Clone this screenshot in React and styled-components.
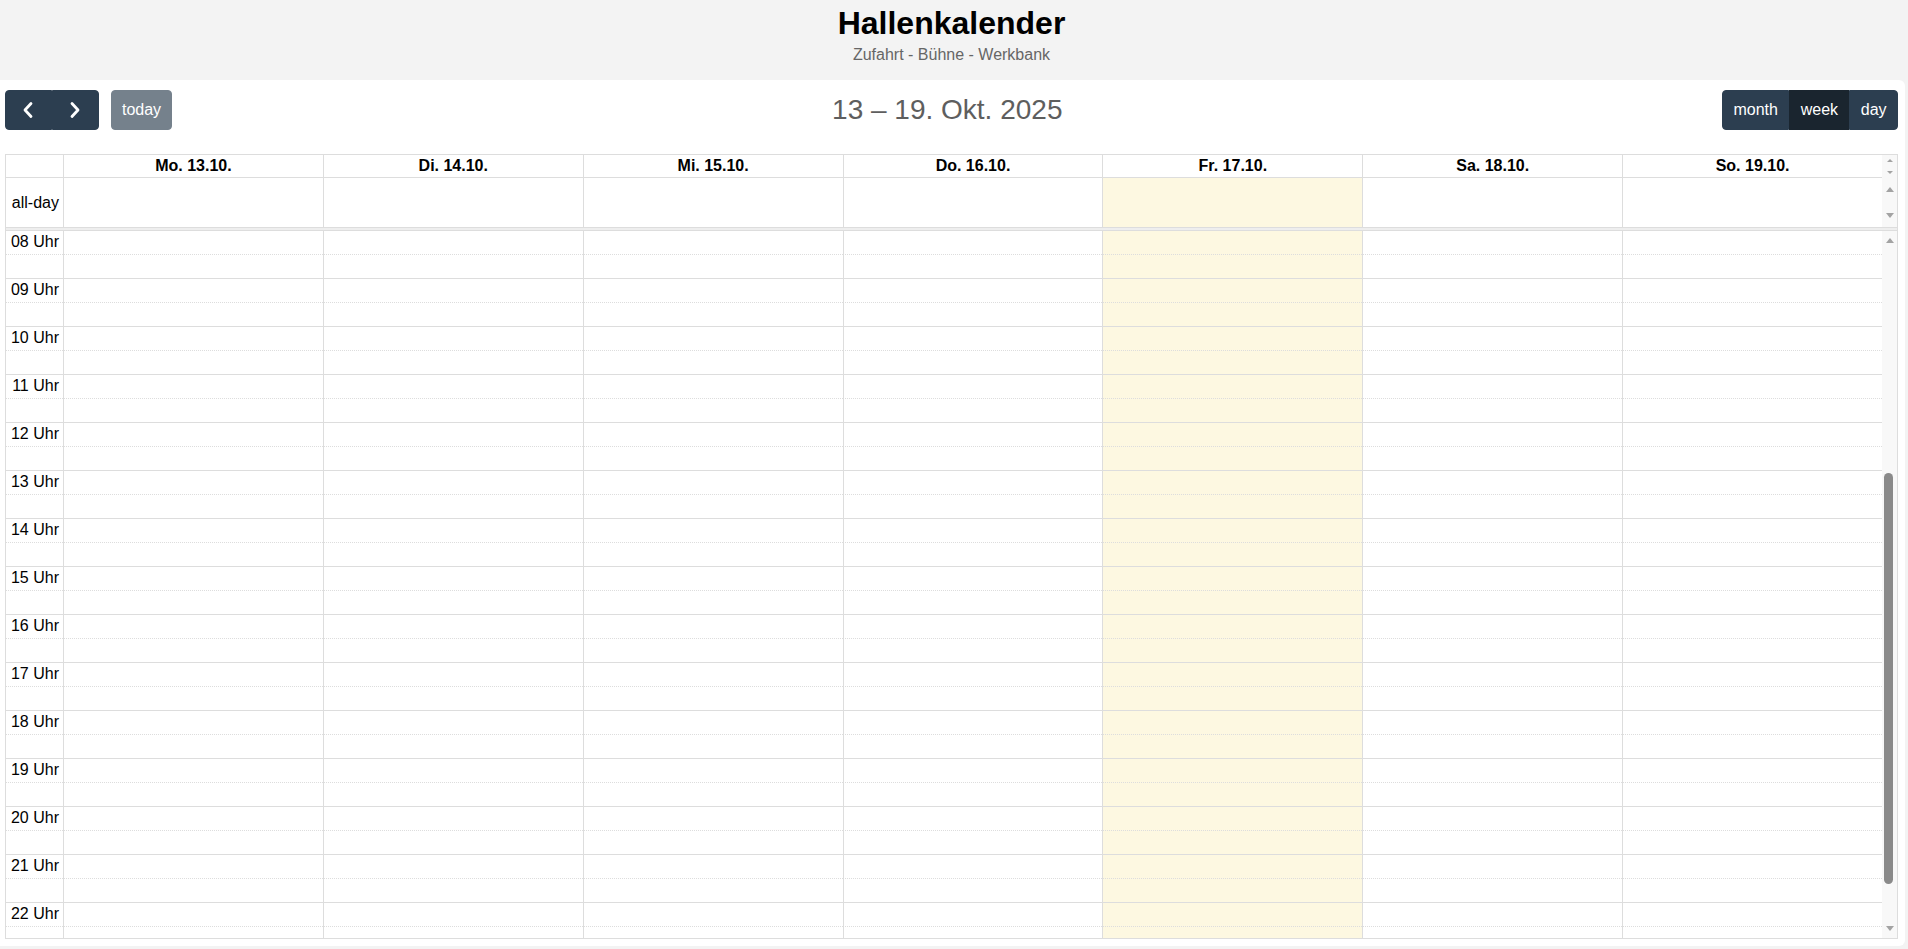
import styled, { createGlobalStyle } from "styled-components";

const GlobalStyle = createGlobalStyle`
  html, body {
    margin: 0;
    padding: 0;
    background: #f3f3f3;
    overflow: hidden;
  }
  body {
    font-family: "Liberation Sans", Arial, sans-serif;
    font-size: 16px;
    color: #000;
  }
  * {
    box-sizing: border-box;
  }
`;

const Masthead = styled.header`
  height: 80px;
  padding: 5px 5px 0 0;
  text-align: center;
`;

const Title = styled.h1`
  margin: 0;
  font-size: 32px;
  line-height: 1.15;
  font-weight: 700;
  color: #000;
`;

const Subtitle = styled.p`
  margin: 4px 0 0;
  font-size: 16px;
  line-height: 1.15;
  color: #666;
`;

const Card = styled.main`
  background: #fff;
  margin-right: 3px;
  border-radius: 0 6px 6px 0;
  padding: 10px 7px 7px 5px;
`;

const Toolbar = styled.div`
  display: flex;
  align-items: center;
  justify-content: space-between;
  height: 40px;
  margin-bottom: 24px;
`;

const ToolbarChunk = styled.div`
  display: flex;
  align-items: center;
  gap: 12px;
`;

const RangeTitle = styled.h2`
  margin: 0;
  font-size: 28px;
  font-weight: 400;
  line-height: 1.2;
  color: #5e5e5e;
`;

const ButtonGroup = styled.div`
  display: inline-flex;
  & > button {
    border-radius: 0;
  }
  & > button:first-child {
    border-radius: 4px 0 0 4px;
  }
  & > button:last-child {
    border-radius: 0 4px 4px 0;
  }
`;

const Button = styled.button`
  display: inline-flex;
  align-items: center;
  justify-content: center;
  height: 40px;
  padding: 0 0.65em;
  font-family: inherit;
  font-size: 16px;
  line-height: 1.5;
  color: #fff;
  background: ${(p) => (p.$active ? "#1a252f" : "#2c3e50")};
  border: 1px solid ${(p) => (p.$active ? "#1a252f" : "#2c3e50")};
  border-radius: 4px;
  opacity: ${(p) => (p.disabled ? 0.65 : 1)};
  cursor: pointer;
`;

const Calendar = styled.section`
  border: 1px solid #ddd;
`;

const HeadRow = styled.div`
  display: grid;
  grid-template-columns: 57px repeat(7, 1fr) 15px;
  height: ${(p) => p.$height}px;
`;

const HeadAxis = styled.div`
  border-bottom: 1px solid #ddd;
`;

const DayHead = styled.div`
  border-left: 1px solid #ddd;
  border-bottom: 1px solid #ddd;
  text-align: center;
  font-weight: 700;
  line-height: 22px;
  white-space: nowrap;
`;

const AllDayAxis = styled.div`
  display: flex;
  align-items: center;
  justify-content: flex-end;
  padding: 0 4px;
  white-space: nowrap;
`;

const DayCell = styled.div`
  border-left: 1px solid #ddd;
  background: ${(p) => (p.$today ? "#fdf8e1" : "#fff")};
`;

const ScrollStub = styled.div`
  display: flex;
  flex-direction: column;
  justify-content: space-between;
  align-items: center;
  padding: ${(p) => p.$pad}px 0;
  background: #f8f8f8;
`;

const Divider = styled.div`
  height: 4px;
  background: #eee;
  border-top: 1px solid #ddd;
  border-bottom: 1px solid #ddd;
`;

const Body = styled.div`
  display: flex;
  height: 707px;
`;

const SlotGrid = styled.div`
  flex: 1;
  display: grid;
  grid-template-columns: 57px repeat(7, 1fr);
  grid-auto-rows: 24px;
  overflow: hidden;
`;

const SlotLabel = styled.div`
  padding: 2px 4px 0;
  text-align: right;
  white-space: nowrap;
  line-height: 1.15;
  border-bottom: 1px ${(p) => (p.$minor ? "solid" : "dotted")} #ddd;
`;

const SlotCell = styled.div`
  border-left: 1px solid #ddd;
  border-bottom: 1px ${(p) => (p.$minor ? "solid" : "dotted")} #ddd;
  background: ${(p) => (p.$today ? "#fdf8e1" : "#fff")};
`;

const Scrollbar = styled.div`
  width: 15px;
  display: flex;
  flex-direction: column;
  background: #f8f8f8;
`;

const ScrollButton = styled.div`
  height: 19px;
  display: flex;
  align-items: center;
  justify-content: center;
`;

const ScrollTrack = styled.div`
  flex: 1;
`;

const Thumb = styled.div`
  width: 9px;
  margin-left: 2px;
  border-radius: 5px;
  background: #8a8a8a;
`;

const days = [
  "Mo. 13.10.",
  "Di. 14.10.",
  "Mi. 15.10.",
  "Do. 16.10.",
  "Fr. 17.10.",
  "Sa. 18.10.",
  "So. 19.10.",
];
const TODAY = 4;

const SLOT = 24;
const VISIBLE = 707;
const CONTENT = 48 * SLOT;
const SCROLL_TOP = 8 * 2 * SLOT;
const TRACK = VISIBLE - 2 * 19;

const Chevron = ({ dir }) => (
  <svg width="24" height="24" viewBox="0 0 24 24" fill="none">
    <polyline
      points={dir === "left" ? "15 5.5 9 12 15 18.5" : "9 5.5 15 12 9 18.5"}
      stroke="#fff"
      strokeWidth="2.8"
      strokeLinecap="round"
      strokeLinejoin="round"
    />
  </svg>
);

const Arrow = ({ up, w = 8, h = 5 }) => (
  <svg width={w} height={h} viewBox={`0 0 ${w} ${h}`}>
    <polygon
      points={up ? `0 ${h} ${w / 2} 0 ${w} ${h}` : `0 0 ${w} 0 ${w / 2} ${h}`}
      fill="#a3a3a3"
    />
  </svg>
);

const pad = (n) => String(n).padStart(2, "0");

export default function App() {
  const hours = [];
  for (let h = 8; h <= 22; h++) hours.push(h);

  const thumbTop = Math.round((SCROLL_TOP / CONTENT) * TRACK);
  const thumbHeight = Math.round((VISIBLE / CONTENT) * TRACK);

  return (
    <>
      <GlobalStyle />
      <Masthead>
        <Title>Hallenkalender</Title>
        <Subtitle>Zufahrt - Bühne - Werkbank</Subtitle>
      </Masthead>
      <Card>
        <Toolbar>
          <ToolbarChunk>
            <ButtonGroup>
              <Button aria-label="prev">
                <Chevron dir="left" />
              </Button>
              <Button aria-label="next">
                <Chevron dir="right" />
              </Button>
            </ButtonGroup>
            <Button disabled>today</Button>
          </ToolbarChunk>
          <RangeTitle>13 – 19. Okt. 2025</RangeTitle>
          <ToolbarChunk>
            <ButtonGroup>
              <Button>month</Button>
              <Button $active>week</Button>
              <Button>day</Button>
            </ButtonGroup>
          </ToolbarChunk>
        </Toolbar>

        <Calendar>
          <HeadRow $height={23}>
            <HeadAxis />
            {days.map((d) => (
              <DayHead key={d}>{d}</DayHead>
            ))}
            <ScrollStub $pad={4}>
              <Arrow up w={6} h={3} />
              <Arrow w={6} h={3} />
            </ScrollStub>
          </HeadRow>

          <HeadRow $height={49}>
            <AllDayAxis>all-day</AllDayAxis>
            {days.map((d, i) => (
              <DayCell key={d} $today={i === TODAY} />
            ))}
            <ScrollStub $pad={9}>
              <Arrow up />
              <Arrow />
            </ScrollStub>
          </HeadRow>

          <Divider />

          <Body>
            <SlotGrid>
              {hours.map((h) =>
                [false, true].map((minor) => (
                  <div key={`${h}-${minor}`} style={{ display: "contents" }}>
                    <SlotLabel $minor={minor}>{minor ? "" : `${pad(h)} Uhr`}</SlotLabel>
                    {days.map((d, i) => (
                      <SlotCell key={d} $minor={minor} $today={i === TODAY} />
                    ))}
                  </div>
                ))
              )}
            </SlotGrid>
            <Scrollbar>
              <ScrollButton>
                <Arrow up />
              </ScrollButton>
              <ScrollTrack>
                <Thumb style={{ marginTop: thumbTop, height: thumbHeight }} />
              </ScrollTrack>
              <ScrollButton>
                <Arrow />
              </ScrollButton>
            </Scrollbar>
          </Body>
        </Calendar>
      </Card>
    </>
  );
}
